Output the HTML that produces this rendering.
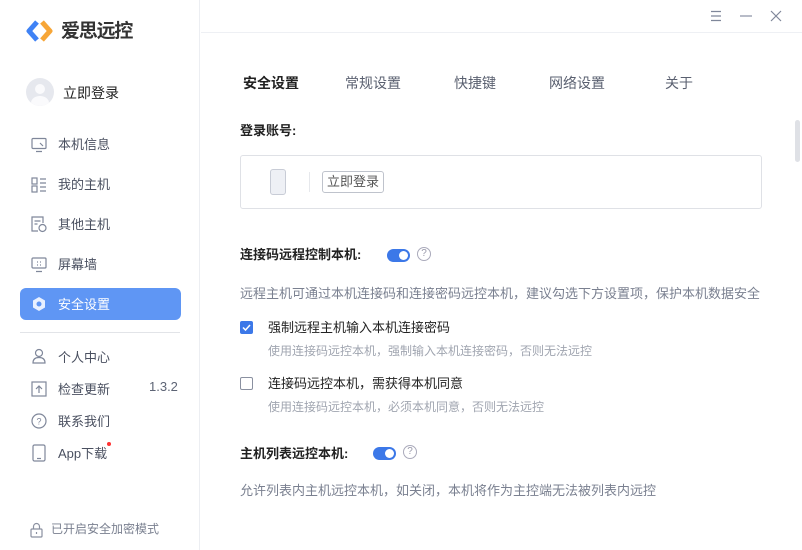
<!DOCTYPE html>
<html><head><meta charset="utf-8"><style>
*{margin:0;padding:0;box-sizing:border-box}
body{width:802px;height:550px;overflow:hidden;background:#fff;font-family:"Liberation Sans","Noto Sans CJK SC",sans-serif;position:relative;color:#222}
.a{position:absolute;white-space:nowrap}
.t{margin-top:-2px}
.side{position:absolute;left:0;top:0;width:200px;height:550px;border-right:1px solid #eceef2;background:#fff}
.navt{position:absolute;left:58px;font-size:13px;color:#4a5060;margin-top:-2px}
.tab{position:absolute;top:73px;font-size:14px;color:#5a6070}
svg{position:absolute}
.sw{position:absolute;width:23px;height:13px;border-radius:7px;background:#3c78e8}
.sw:after{content:"";position:absolute;right:2px;top:2px;width:9px;height:9px;border-radius:50%;background:#fff}
.q{position:absolute;width:14px;height:14px;border:1px solid #aab;border-radius:50%;font-size:10px;color:#99a;text-align:center;line-height:12px}
</style></head><body>
<div class="side">
<svg style="left:26px;top:19px" width="28" height="24" viewBox="0 0 28 24"><path d="M11 3 L3 12 L11 21" stroke="#3f82f5" stroke-width="5" fill="none" stroke-linejoin="round"/><path d="M16 3 L24 12 L16 21" stroke="#f7a637" stroke-width="5" fill="none" stroke-linejoin="round"/></svg>
<div class="a t" style="left:61px;top:18px;font-size:19px;font-weight:bold;color:#333;letter-spacing:-1.2px">爱思远控</div>
<div class="a" style="left:26px;top:78px;width:28px;height:28px;border-radius:50%;background:#e6e8ee;overflow:hidden"><div style="position:absolute;left:9px;top:6px;width:10px;height:10px;border-radius:50%;background:#fafafc"></div><div style="position:absolute;left:5px;top:18px;width:18px;height:14px;border-radius:50%;background:#fafafc"></div></div>
<div class="a t" style="left:63px;top:85px;font-size:14px;color:#222">立即登录</div>
<svg style="left:31px;top:137px" width="16" height="16" viewBox="0 0 16 16" fill="none" stroke="#7f879a" stroke-width="1.2"><rect x="1" y="1.5" width="14" height="10" rx="1"/><path d="M5 14.5h6M9 6l3 3"/></svg>
<div class="navt" style="top:136px">本机信息</div>
<svg style="left:31px;top:177px" width="16" height="16" viewBox="0 0 16 16" fill="none" stroke="#7f879a" stroke-width="1.2"><rect x="1" y="1" width="5" height="6"/><rect x="1" y="9" width="5" height="6"/><path d="M9 2h6M9 6h6M9 10h6M9 14h6"/></svg>
<div class="navt" style="top:176px">我的主机</div>
<svg style="left:31px;top:216px" width="16" height="17" viewBox="0 0 16 17" fill="none" stroke="#7f879a" stroke-width="1.2"><path d="M12 7V1H1v14h6M3.5 5h6M3.5 8h3"/><circle cx="11.5" cy="12" r="3.5"/></svg>
<div class="navt" style="top:216px">其他主机</div>
<svg style="left:31px;top:257px" width="16" height="16" viewBox="0 0 16 16" fill="none" stroke="#7f879a" stroke-width="1.2"><rect x="1" y="1" width="14" height="10" rx="1"/><path d="M5 14.5h6M6 5h1M9 5h1M6 8h1M9 8h1"/></svg>
<div class="navt" style="top:256px">屏幕墙</div>
<div class="a" style="left:20px;top:288px;width:161px;height:32px;border-radius:6px;background:#5f96f4"></div>
<svg style="left:31px;top:296px" width="16" height="16" viewBox="0 0 16 16"><path d="M8 1l6 3.5v7L8 15l-6-3.5v-7z" fill="#e8f0ff"/><circle cx="8" cy="8" r="2.5" fill="#5f96f4"/></svg>
<div class="navt" style="top:296px;color:#fff">安全设置</div>
<div class="a" style="left:20px;top:332px;width:160px;height:1px;background:#e2e4e8"></div>
<svg style="left:31px;top:348px" width="16" height="16" viewBox="0 0 16 16" fill="none" stroke="#7f879a" stroke-width="1.2"><circle cx="8" cy="5" r="3.5"/><path d="M2 15c0-4 2.5-5.5 6-5.5s6 1.5 6 5.5z"/></svg>
<div class="navt" style="top:349px">个人中心</div>
<svg style="left:31px;top:381px" width="16" height="16" viewBox="0 0 16 16" fill="none" stroke="#7f879a" stroke-width="1.2"><rect x="1" y="1" width="14" height="14"/><path d="M8 12V5M5 8l3-3 3 3"/></svg>
<div class="navt" style="top:381px">检查更新</div>
<div class="a t" style="left:149px;top:381px;font-size:13px;color:#5d6475">1.3.2</div>
<svg style="left:31px;top:413px" width="16" height="16" viewBox="0 0 16 16" fill="none" stroke="#7f879a" stroke-width="1.2"><circle cx="8" cy="8" r="7"/><text x="8" y="11.5" font-size="9" text-anchor="middle" fill="#7f879a" stroke="none" font-family="Liberation Sans">?</text></svg>
<div class="navt" style="top:413px">联系我们</div>
<svg style="left:32px;top:444px" width="14" height="18" viewBox="0 0 14 18" fill="none" stroke="#7f879a" stroke-width="1.2"><rect x="1" y="1" width="12" height="16" rx="1.5"/><path d="M5 14.5h4"/></svg>
<div class="navt" style="top:445px">App下载</div>
<div class="a" style="left:107px;top:442px;width:4px;height:4px;border-radius:50%;background:#f33"></div>
<svg style="left:30px;top:522px" width="13" height="16" viewBox="0 0 13 16" fill="none" stroke="#8a90a0" stroke-width="1.2"><path d="M3.5 7V4.5a3 3 0 016 0V7"/><rect x="1" y="7" width="11" height="8" rx="1"/><path d="M6.5 10v2"/></svg>
<div class="a t" style="left:51px;top:522px;font-size:12px;color:#7a8090">已开启安全加密模式</div>
</div>
<div class="a" style="left:201px;top:32px;width:601px;height:1px;background:#eef0f4"></div>
<svg style="left:710px;top:10px" width="12" height="12" viewBox="0 0 12 12" stroke="#7f879a" stroke-width="1.2"><path d="M1 1.5h10M1 6h10M1 10.5h10"/></svg>
<svg style="left:740px;top:10px" width="12" height="12" viewBox="0 0 12 12" stroke="#9aa0b0" stroke-width="1.4"><path d="M0 6h12"/></svg>
<svg style="left:770px;top:10px" width="12" height="12" viewBox="0 0 12 12" stroke="#7f879a" stroke-width="1.2"><path d="M1 1l10 10M11 1L1 11"/></svg>
<div class="a" style="left:795px;top:120px;width:5px;height:42px;border-radius:3px;background:#dfe1e6"></div>
<div class="tab" style="left:243px;color:#222;font-weight:bold">安全设置</div>
<div class="tab" style="left:345px">常规设置</div>
<div class="tab" style="left:454px">快捷键</div>
<div class="tab" style="left:549px">网络设置</div>
<div class="tab" style="left:665px">关于</div>
<div class="a t" style="left:240px;top:122px;font-size:13px;font-weight:bold;color:#222">登录账号:</div>
<div class="a" style="left:240px;top:155px;width:522px;height:54px;border:1px solid #dfe1e6;border-radius:3px"></div>
<div class="a" style="left:270px;top:169px;width:16px;height:26px;border-radius:3px;border:1px solid #c8ccd6;background:#eef0f5"></div>
<div class="a" style="left:309px;top:172px;width:1px;height:20px;background:#e6e8ec"></div>
<div class="a" style="left:322px;top:171px;width:62px;height:22px;border:1px solid #bfc3cc;border-radius:3px;font-size:13px;color:#555;text-align:center;line-height:19px">立即登录</div>
<div class="a t" style="left:240px;top:246px;font-size:13px;font-weight:bold;color:#222">连接码远程控制本机:</div>
<div class="sw" style="left:387px;top:249px"></div>
<div class="q" style="left:417px;top:247px">?</div>
<div class="a t" style="left:240px;top:285px;font-size:13px;color:#7a8090">远程主机可通过本机连接码和连接密码远控本机，建议勾选下方设置项，保护本机数据安全</div>
<div class="a" style="left:240px;top:321px;width:13px;height:13px;border-radius:2px;background:#3c78e8"></div>
<svg style="left:240px;top:321px" width="13" height="13" viewBox="0 0 13 13" fill="none" stroke="#fff" stroke-width="1.5"><path d="M3 6.5l2.5 2.5 4.5-5"/></svg>
<div class="a t" style="left:268px;top:319px;font-size:13px;color:#222">强制远程主机输入本机连接密码</div>
<div class="a t" style="left:268px;top:344px;font-size:12px;color:#a0a5b0">使用连接码远控本机，强制输入本机连接密码，否则无法远控</div>
<div class="a" style="left:240px;top:377px;width:13px;height:13px;border-radius:2px;border:1px solid #8a90a0"></div>
<div class="a t" style="left:268px;top:375px;font-size:13px;color:#222">连接码远控本机，需获得本机同意</div>
<div class="a t" style="left:268px;top:400px;font-size:12px;color:#a0a5b0">使用连接码远控本机，必须本机同意，否则无法远控</div>
<div class="a t" style="left:240px;top:445px;font-size:13px;font-weight:bold;color:#222">主机列表远控本机:</div>
<div class="sw" style="left:373px;top:447px"></div>
<div class="q" style="left:403px;top:445px">?</div>
<div class="a t" style="left:240px;top:482px;font-size:13px;color:#7a8090">允许列表内主机远控本机，如关闭，本机将作为主控端无法被列表内远控</div>
</body></html>
